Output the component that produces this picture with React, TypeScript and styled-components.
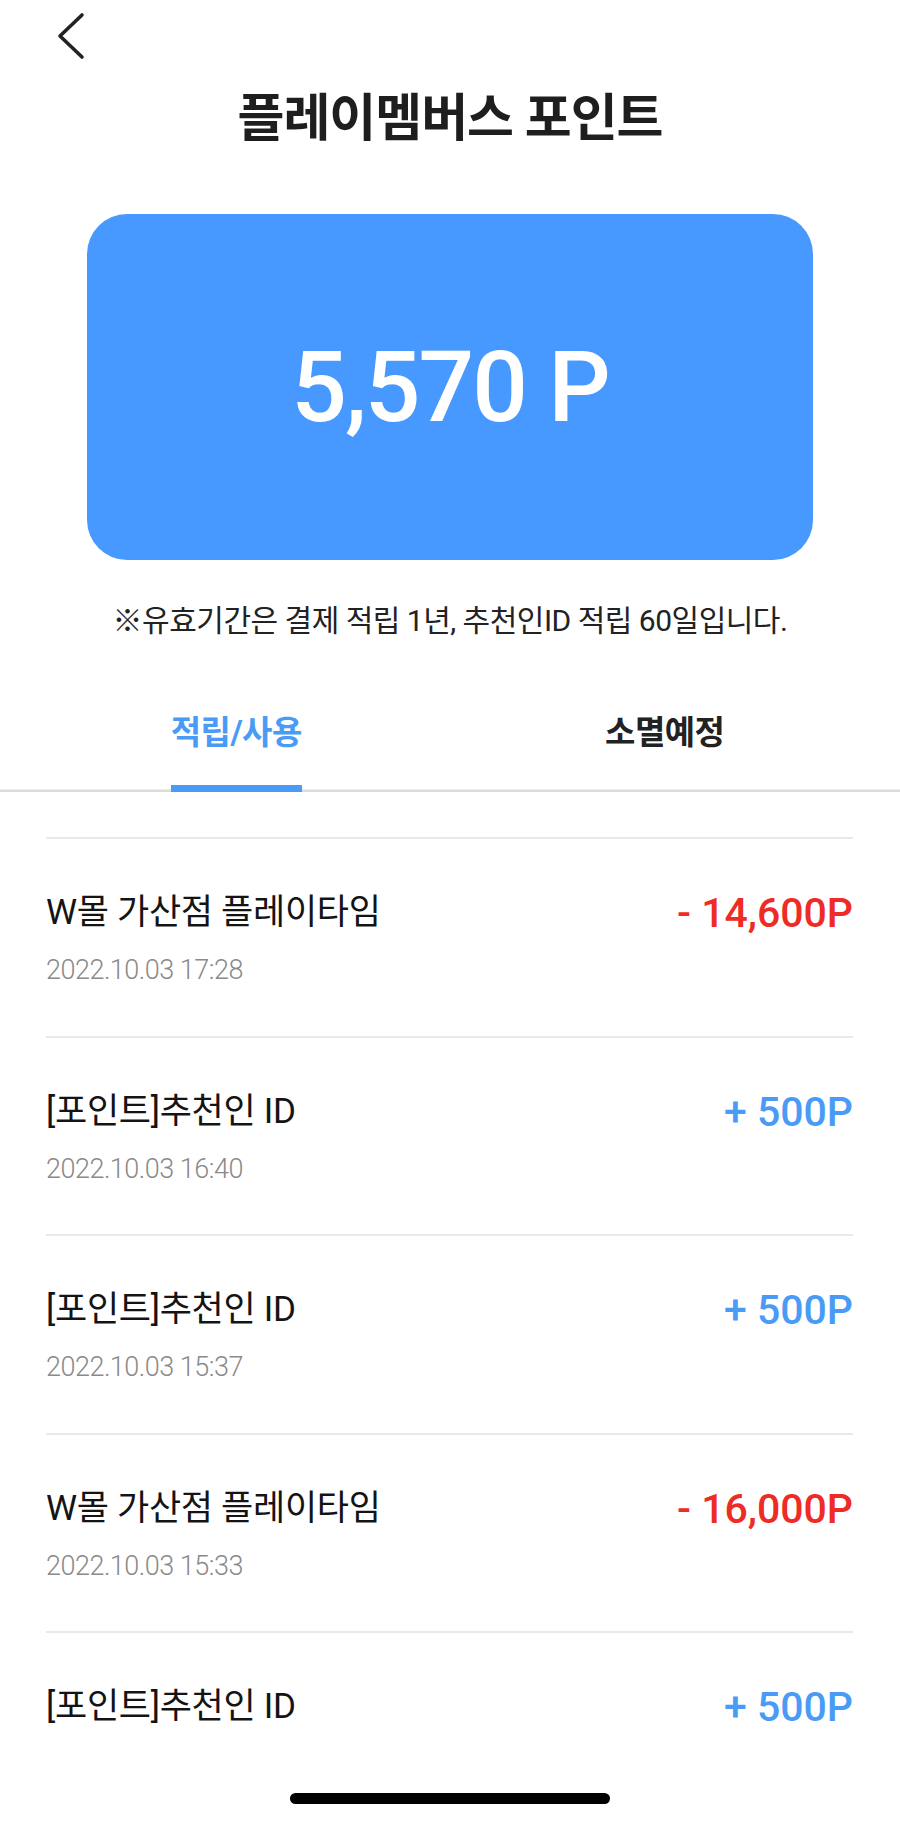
import React from "react";
import styled, { createGlobalStyle } from "styled-components";

const GlobalStyle = createGlobalStyle`
  html, body {
    margin: 0;
    padding: 0;
    background: #ffffff;
  }
  body {
    font-family: Roboto, "Noto Sans CJK KR", "Noto Sans", sans-serif;
    color: #1a1a1a;
  }
  * {
    box-sizing: border-box;
  }
`;

const Screen = styled.div`
  width: 900px;
  height: 1823px;
  display: flex;
  flex-direction: column;
  background: #ffffff;
  overflow: hidden;
`;

const BackRow = styled.div`
  height: 72px;
  display: flex;
  align-items: center;
  padding-left: 54px;
`;

const BackButton = styled.button`
  width: 32px;
  height: 48px;
  padding: 0;
  border: none;
  background: none;
  display: flex;
`;

const Title = styled.h1`
  margin: 17px 0 0;
  height: 60px;
  line-height: 60px;
  text-align: center;
  font-size: 51px;
  font-weight: 700;
  letter-spacing: -1px;
  color: #1e1e1e;
`;

const PointCard = styled.div`
  margin: 65px 87px 0;
  height: 346px;
  border-radius: 40px;
  background: #4799ff;
  display: flex;
  align-items: center;
  justify-content: center;
`;

const PointValue = styled.span`
  font-family: Roboto, sans-serif;
  font-size: 98px;
  font-weight: 500;
  letter-spacing: -2px;
  color: #ffffff;
`;

const Notice = styled.p`
  margin: 41px 0 0;
  line-height: 40px;
  text-align: center;
  font-size: 30px;
  letter-spacing: -0.5px;
  color: #222222;
`;

const TabBar = styled.div`
  margin-top: 52px;
  display: grid;
  grid-template-columns: 1fr 1fr;
  padding: 0 21px 0 22px;
  box-shadow: inset 0 -2.5px 0 #dcdcdc;
`;

const Tab = styled.button<{ $active?: boolean }>`
  justify-self: center;
  padding: 20px 0 32px;
  border: none;
  border-bottom: 7px solid ${(p) => (p.$active ? "#4a9bf5" : "transparent")};
  background: none;
  font-family: inherit;
  font-size: 33px;
  line-height: 40px;
  font-weight: 700;
  letter-spacing: -0.5px;
  color: ${(p) => (p.$active ? "#4a9bf5" : "#222222")};
`;

const HistoryList = styled.ul`
  flex: 1;
  min-height: 0;
  overflow: hidden;
  list-style: none;
  margin: 0;
  padding: 45px 47px 0 46px;
`;

const HistoryRow = styled.li`
  height: 198.6px;
  border-top: 2px solid #e9e9e9;
  padding-top: 54px;
  display: flex;
  flex-direction: column;
  gap: 22px;
`;

const RowTop = styled.div`
  display: flex;
  justify-content: space-between;
  align-items: center;
  height: 40px;
`;

const RowTitle = styled.span`
  font-size: 35px;
  line-height: 40px;
  letter-spacing: -0.3px;
  color: #141414;
`;

const Amount = styled.span<{ $minus?: boolean }>`
  font-family: Roboto, sans-serif;
  font-size: 41px;
  line-height: 40px;
  font-weight: 500;
  letter-spacing: 0;
  color: ${(p) => (p.$minus ? "#ee2b25" : "#4a9bf5")};
`;

const RowDate = styled.span`
  font-size: 27px;
  line-height: 30px;
  font-weight: 300;
  letter-spacing: -0.5px;
  color: #8a8a8a;
`;

const BottomBar = styled.div`
  height: 83px;
  display: flex;
  justify-content: center;
  align-items: flex-end;
  padding-bottom: 19px;
  background: #ffffff;
`;

const HomeIndicator = styled.div`
  width: 320px;
  height: 11px;
  border-radius: 6px;
  background: #000000;
`;

type Entry = {
  title: string;
  date?: string;
  amount: string;
  minus: boolean;
};

const entries: Entry[] = [
  { title: "W몰 가산점 플레이타임", date: "2022.10.03 17:28", amount: "- 14,600P", minus: true },
  { title: "[포인트]추천인 ID", date: "2022.10.03 16:40", amount: "+ 500P", minus: false },
  { title: "[포인트]추천인 ID", date: "2022.10.03 15:37", amount: "+ 500P", minus: false },
  { title: "W몰 가산점 플레이타임", date: "2022.10.03 15:33", amount: "- 16,000P", minus: true },
  { title: "[포인트]추천인 ID", amount: "+ 500P", minus: false },
];

const App = () => {
  return (
    <>
      <GlobalStyle />
      <Screen>
        <BackRow>
          <BackButton aria-label="뒤로">
            <svg width="32" height="48" viewBox="0 0 32 48" fill="none">
              <path
                d="M28 3 L6 24 L28 45"
                stroke="#222222"
                strokeWidth="3.6"
                strokeLinecap="round"
                strokeLinejoin="round"
              />
            </svg>
          </BackButton>
        </BackRow>
        <Title>플레이멤버스 포인트</Title>
        <PointCard>
          <PointValue>5,570 P</PointValue>
        </PointCard>
        <Notice>※유효기간은 결제 적립 1년, 추천인ID 적립 60일입니다.</Notice>
        <TabBar>
          <Tab $active>적립/사용</Tab>
          <Tab>소멸예정</Tab>
        </TabBar>
        <HistoryList>
          {entries.map((e, i) => (
            <HistoryRow key={i}>
              <RowTop>
                <RowTitle>{e.title}</RowTitle>
                <Amount $minus={e.minus}>{e.amount}</Amount>
              </RowTop>
              {e.date && <RowDate>{e.date}</RowDate>}
            </HistoryRow>
          ))}
        </HistoryList>
        <BottomBar>
          <HomeIndicator />
        </BottomBar>
      </Screen>
    </>
  );
};

export default App;
